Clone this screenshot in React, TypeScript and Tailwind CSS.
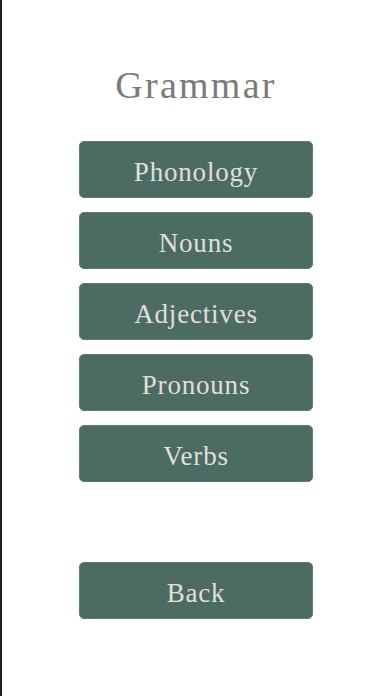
const items = ['Phonology', 'Nouns', 'Adjectives', 'Pronouns', 'Verbs'];

function MenuButton({ label }: { label: string }) {
  return (
    <button
      type="button"
      className="flex h-[57px] w-[234px] items-center justify-center rounded-[5px] border border-[#5a7d74] bg-[#4b6b63] pt-[5px] text-[27px] tracking-[0.03em] text-[#e0e0da]"
    >
      {label}
    </button>
  );
}

export default function App() {
  return (
    <div
      className="flex h-[696px] w-[392px] flex-col items-center bg-white shadow-[inset_2px_0_0_#222]"
      style={{ fontFamily: '"Liberation Serif", serif' }}
    >
      {/* Title */}
      <h1 className="mt-[62px] text-[38px] leading-[46px] tracking-[0.06em] text-[#7a7a7a]">Grammar</h1>

      {/* Sections */}
      <div className="mt-[33px] flex flex-col gap-[14px]">
        {items.map((item) => (
          <MenuButton key={item} label={item} />
        ))}
      </div>

      <div className="mt-[80px]">
        <MenuButton label="Back" />
      </div>
    </div>
  );
}
